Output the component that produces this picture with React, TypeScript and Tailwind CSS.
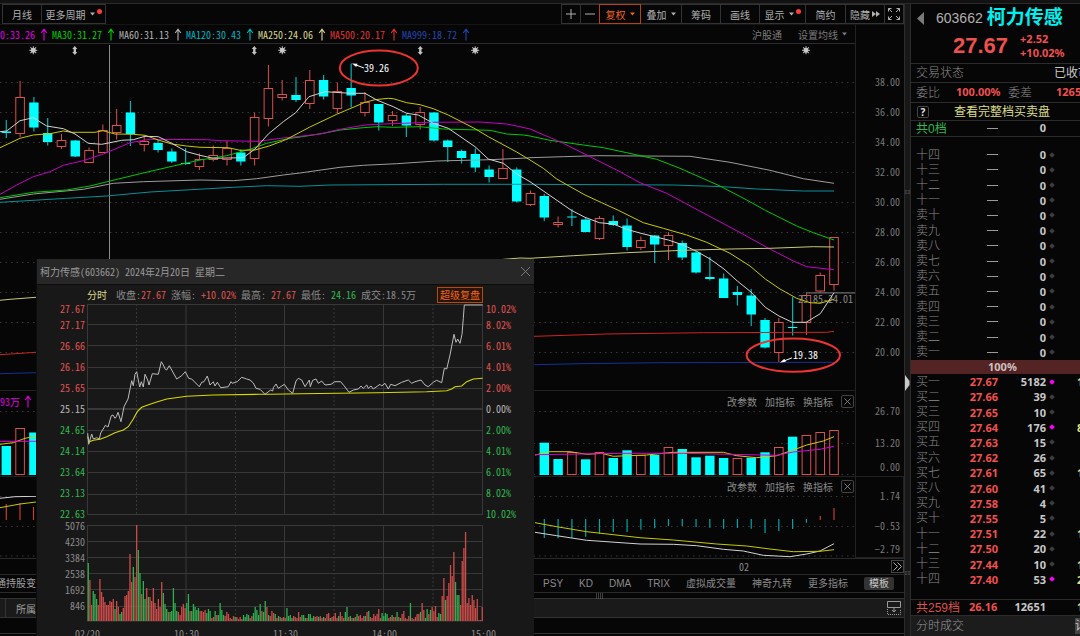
import React from "react";

type Kind = "up" | "down";
type Candle = [Kind, number, number, number, number];

const MONO = "font-['Noto_Sans_Mono_CJK_SC','Liberation_Mono','Noto_Sans_CJK_SC',monospace]";
const SANS = "font-['Liberation_Sans','Noto_Sans_CJK_SC',sans-serif]";
const BOLD = "font-['Noto_Sans','Noto_Sans_CJK_SC',sans-serif] font-bold";

const RED = "#d9504c";
const CYAN = "#00ffff";

const candleX = (i: number) => 6.3 + 13.795 * i;

/* kind, high, body top, body bottom, low */
const candles: Candle[] = [
  ["down", 120, 131.5, 133, 138], ["up", 81, 97.5, 133.5, 137], ["down", 97, 102.5, 127.5, 131.5],
  ["down", 118, 133, 142, 145.5], ["up", 134, 140.5, 146.5, 149], ["down", 140, 140.5, 156.5, 157],
  ["up", 147.5, 150.5, 162.5, 162.5], ["up", 124.5, 130.5, 152.5, 153], ["up", 109, 125.5, 132.5, 139.5],
  ["down", 101, 112.5, 134, 146], ["up", 136, 141.5, 144.5, 151.5], ["down", 140, 143, 150, 152.5],
  ["down", 148.5, 151.5, 161.5, 163], ["down", 148, 163, 164, 165], ["up", 153.5, 159.5, 166.5, 170],
  ["up", 145.5, 155.5, 159.5, 161.5], ["up", 141, 148.5, 159.5, 165.5], ["down", 149.5, 152.5, 161.5, 165.5],
  ["up", 112.5, 117.5, 158.5, 165.5], ["up", 65, 88.5, 118.5, 126.5], ["up", 80, 94.5, 97.5, 100.5],
  ["down", 77, 95, 100, 102], ["up", 70, 80.5, 103.5, 109], ["down", 75, 80, 96.5, 99.5],
  ["up", 82.5, 91.5, 108.5, 113.5], ["down", 63.5, 88, 95.5, 107.5], ["up", 92, 102.5, 112.5, 116.5],
  ["down", 104, 104, 122.5, 130.5], ["up", 111, 115.5, 120.5, 126], ["down", 113.5, 115.5, 125.5, 137],
  ["up", 107, 112.5, 124.5, 129.5], ["down", 112, 112.5, 140.5, 141.5], ["down", 139.5, 140.5, 147, 162],
  ["down", 149.5, 151, 158, 163.5], ["down", 148.5, 154, 167.5, 172], ["down", 165.5, 169.5, 177, 182.5],
  ["up", 149, 168.5, 178.5, 179], ["down", 167.5, 169.5, 201.5, 202.5], ["up", 190.5, 193.5, 204.5, 206],
  ["down", 194, 196, 217.5, 221], ["up", 216.5, 222.5, 224.5, 227.5], ["down", 209, 216.5, 217.5, 226],
  ["down", 217, 219.5, 232, 232.5], ["up", 216, 218.5, 238.5, 240], ["down", 215.5, 221, 225, 226],
  ["down", 218.5, 225.5, 247, 250.5], ["up", 236.5, 240.5, 247.5, 250], ["down", 235, 235.5, 244.5, 263],
  ["up", 232, 235.5, 245.5, 260], ["down", 240.5, 243, 257.5, 260], ["down", 251, 252.5, 272.5, 273.5],
  ["down", 257, 277, 279, 280.5], ["down", 273.5, 278.5, 298, 298], ["down", 286, 292, 295, 305.5],
  ["down", 289, 295.5, 314.5, 326], ["down", 318, 320, 347.5, 348.5], ["up", 318, 322.5, 352.5, 362],
  ["down", 297, 327, 328, 335.5], ["up", 293, 295.5, 322.5, 335], ["up", 272.5, 275.5, 291, 292.5],
  ["up", 237, 237.5, 284.5, 290.5],
];

type Seg = { ox: number; oy: number; d: number[] };

/* Series are stored as x,y pairs at three units per chart pixel, in segments with their own origin. */
const trace = (segs: Seg[]) =>
  segs
    .map(({ ox, oy, d }) => {
      const out: string[] = [];
      for (let i = 0; i < d.length; i += 2) out.push(`${(ox + d[i] / 3).toFixed(1)},${(oy + d[i + 1] / 3).toFixed(1)}`);
      return out.join(" ");
    })
    .join(" ");

const averages: { color: string; segs: Seg[] }[] = [
  { color: "#0a8f98", segs: [
    { ox: 0, oy: 0, d: [0, 607, 200, 595, 320, 588, 450, 576, 700, 562, 800, 557, 900, 559] },
    { ox: 230, oy: 0, d: [300, 555, 640, 553, 890, 553] },
    { ox: 530, oy: 0, d: [0, 553, 430, 555, 580, 560, 680, 567, 820, 573, 912, 573] } ] },
  { color: "#9c9c9c", segs: [
    { ox: 0, oy: 0, d: [0, 598, 100, 582, 250, 568, 340, 550, 430, 545, 600, 540, 700, 542, 770, 536, 850, 525, 900, 519] },
    { ox: 230, oy: 0, d: [330, 502, 400, 496, 500, 491, 620, 483, 780, 479, 890, 474] },
    { ox: 530, oy: 0, d: [0, 473, 100, 470, 200, 467, 480, 469, 600, 487, 720, 511, 820, 536, 912, 550] } ] },
  { color: "#00c800", segs: [
    { ox: 0, oy: 0, d: [0, 593, 100, 577, 200, 570, 270, 558, 330, 543, 430, 519, 520, 498, 600, 480, 680, 467, 750, 448, 800, 430, 870, 415, 900, 411] },
    { ox: 230, oy: 0, d: [280, 400, 330, 390, 400, 383, 440, 380, 490, 382, 570, 380, 640, 387, 780, 391, 830, 402, 880, 405] },
    { ox: 530, oy: 0, d: [0, 408, 60, 421, 160, 435, 220, 443, 290, 458, 380, 478, 450, 505, 570, 558, 650, 600, 706, 631, 800, 678, 850, 698, 912, 720] } ] },
  { color: "#c400c4", segs: [
    { ox: 0, oy: 0, d: [0, 583, 50, 555, 100, 530, 150, 515, 190, 496, 250, 482, 310, 462, 390, 428, 450, 418, 620, 419, 660, 422, 775, 424, 850, 414, 890, 410] },
    { ox: 230, oy: 0, d: [270, 402, 330, 388, 405, 375, 460, 372, 600, 367, 750, 366, 830, 372, 870, 380] },
    { ox: 530, oy: 0, d: [0, 387, 100, 430, 180, 470, 260, 510, 330, 548, 410, 580, 505, 631, 620, 692, 710, 742, 790, 783, 830, 800, 912, 809] } ] },
  { color: "#c8c800", segs: [
    { ox: 0, oy: 0, d: [0, 443, 60, 415, 100, 405, 150, 401, 190, 393, 215, 397, 285, 397, 309, 392, 345, 402, 400, 403, 435, 406, 475, 420, 515, 432, 560, 438, 600, 442, 685, 443, 720, 451, 765, 450, 810, 437, 860, 418] },
    { ox: 230, oy: 0, d: [238, 382, 320, 343, 405, 307, 435, 299, 475, 295, 490, 296, 530, 308, 570, 314, 610, 326, 655, 345, 735, 386, 775, 410, 860, 456] },
    { ox: 530, oy: 0, d: [0, 480, 40, 505, 80, 537, 165, 585, 215, 608, 265, 631, 340, 668, 400, 685, 470, 705, 530, 727, 600, 760, 660, 798, 706, 837, 750, 867, 800, 895, 840, 908, 870, 910, 912, 898] } ] },
  { color: "#d2d2d2", segs: [
    { ox: 0, oy: 0, d: [0, 395, 20, 393, 60, 362, 100, 353, 140, 378, 190, 386, 225, 402, 265, 430, 305, 433, 330, 428, 365, 421, 400, 419, 435, 409, 475, 410, 515, 430, 560, 455, 600, 466, 640, 475, 730, 473, 765, 447, 805, 402, 850, 365, 887, 338] },
    { ox: 230, oy: 0, d: [237, 290, 285, 275, 362, 280, 405, 280, 440, 300, 490, 320, 530, 340, 565, 345, 610, 370, 655, 385, 735, 440, 775, 477, 820, 490, 860, 522] },
    { ox: 530, oy: 0, d: [0, 545, 124, 631, 165, 652, 208, 668, 249, 672, 290, 688, 333, 700, 374, 710, 415, 720, 457, 734, 500, 754, 540, 777, 582, 807, 622, 843, 663, 876, 706, 922, 747, 948, 787, 967, 828, 967, 871, 941, 912, 878] } ] },
  { color: "#c9c97a", segs: [
    { ox: 0, oy: 255, d: [0, 136, 30, 133, 108, 127, 1560, 9] },
    { ox: 530, oy: 210, d: [0, 145, 130, 137, 290, 128, 460, 121, 600, 117, 720, 115, 850, 110, 912, 111] } ] },
  { color: "#cf2222", segs: [
    { ox: 0, oy: 255, d: [0, 299, 108, 292] },
    { ox: 530, oy: 210, d: [15, 379, 230, 372, 520, 368, 890, 367, 912, 364] } ] },
  { color: "#16309a", segs: [
    { ox: 0, oy: 255, d: [0, 356, 108, 353] },
    { ox: 530, oy: 210, d: [15, 464, 150, 461, 390, 458, 912, 457] } ] },
];

function Dotted({ ys, x2 = 855 }: { ys: number[]; x2?: number }) {
  return (
    <g stroke="#383838" strokeDasharray="1.5 4">
      {ys.map((y) => <line key={y} x1={0} x2={x2} y1={y} y2={y} />)}
    </g>
  );
}

function Sun({ x }: { x: number }) {
  return (
    <g transform={`translate(${x} 50.3)`} stroke="#c8c8c8" strokeWidth={1}>
      <circle r={2} fill="#c8c8c8" />
      {[0, 45, 90, 135].map((a) => <line key={a} x1={-4} x2={4} y1={0} y2={0} transform={`rotate(${a})`} />)}
    </g>
  );
}

function UpDown({ x }: { x: number }) {
  return <path d={`M${x} 46l2.6 3h-1.4v3h1.4l-2.6 3-2.6-3h1.4v-3h-1.4z`} fill="#c0c0c0" />;
}

function PriceChart() {
  return (
    <svg viewBox="0 44 855 346" preserveAspectRatio="xMaxYMin slice" className="block h-[346px] w-full" role="img" aria-label="日K线">
      <Dotted ys={[82.5, 112.5, 142.5, 172.5, 202.5, 232.5, 262.5, 292.5, 322.5, 352.5]} />
      <line x1={109.5} x2={109.5} y1={45} y2={260} stroke="#8a8a8a" />
      {candles.map(([kind, high, top, bottom, low], i) => {
        const x = candleX(i);
        const h = bottom - top;
        return kind === "down" ? (
          <g key={i}>
            <line x1={x} x2={x} y1={high} y2={low} stroke="#00b4b8" strokeWidth={1.2} />
            <rect x={x - 4.7} y={top} width={9.4} height={Math.max(h, 1)} fill={CYAN} />
          </g>
        ) : (
          <g key={i} stroke={RED}>
            <line x1={x} x2={x} y1={high} y2={top} />
            <line x1={x} x2={x} y1={bottom} y2={low} />
            <rect x={x - 4.3} y={top} width={8.6} height={h} fill="#060606" />
          </g>
        );
      })}
      <line x1={806} x2={855} y1={292.8} y2={292.8} stroke="#6a6a6a" strokeWidth={1.2} />
      <text x={798} y={303} className="text-[10px]" fill="#8a8a8a">23.85-24.01</text>
      {averages.map((a, i) => (
        <polyline key={i} points={trace(a.segs)} fill="none" stroke={a.color} strokeWidth={1} />
      ))}
      {[33.3, 282.3, 475.2, 806].map((x) => <Sun key={x} x={x} />)}
      {[74.8, 254.3, 420.3].map((x) => <UpDown key={x} x={x} />)}
      <path d="M364 68L355 64.6" stroke="#fff" fill="none" />
      <path d="M352 63.5l5.6 .2-1.4 3.2z" fill="#fff" />
      <text x={364} y={72} className="text-[10px]" fill="#fff">39.26</text>
      <path d="M792 357.8L784 361" stroke="#fff" fill="none" />
      <path d="M780 362.4l4.4-3.6 1.4 3z" fill="#fff" />
      <text x={793} y={358.5} className="text-[10px]" fill="#fff">19.38</text>
      <ellipse cx={378.8} cy={68} rx={39} ry={17.5} fill="none" stroke="#ee3430" strokeWidth={2} />
      <ellipse cx={793.3} cy={355.2} rx={46.7} ry={16.6} fill="none" stroke="#ee3430" strokeWidth={2} />
    </svg>
  );
}

/* candle index -> top of its volume bar */
const volumes: [number, Kind, number][] = [
  [0, "down", 446], [1, "up", 428.5], [2, "down", 432.5],
  [39, "down", 442.7], [40, "down", 459], [41, "up", 452.5], [42, "down", 459.3], [43, "up", 452.5],
  [44, "down", 458], [45, "down", 450.3], [46, "up", 455.5], [47, "down", 455], [48, "up", 447.5],
  [49, "down", 449], [50, "down", 457.3], [51, "down", 455.7], [52, "down", 458], [53, "up", 458.5],
  [54, "down", 457.7], [55, "down", 452.3], [56, "up", 447.5], [57, "down", 436.7], [58, "up", 435.5],
  [59, "up", 432.5], [60, "up", 430.5],
];

function VolumeChart() {
  return (
    <svg viewBox="0 411 855 65" preserveAspectRatio="xMaxYMin slice" className="block h-[65px] w-full" role="img" aria-label="成交量">
      <Dotted ys={[411.5, 443.5, 474.5]} />
      {volumes.map(([i, kind, top]) =>
        kind === "down" ? (
          <rect key={i} x={candleX(i) - 4.7} y={top} width={9.4} height={475 - top} fill={CYAN} />
        ) : (
          <rect key={i} x={candleX(i) - 4.3} y={top} width={8.6} height={474.5 - top} fill="#060606" stroke={RED} />
        ),
      )}
      <polyline fill="none" stroke="#d8c800" points={trace([{ ox: 0, oy: 255, d: [0, 568, 40, 563, 75, 550, 108, 543] }])} />
      <polyline fill="none" stroke="#e800e8" points="0,441.3 36,441.3" />
      <polyline fill="none" stroke="#d8c800" points={trace([{ ox: 530, oy: 390, d: [15, 195, 60, 185, 120, 185, 170, 193, 215, 190, 250, 199, 350, 195, 430, 187, 580, 187, 620, 197, 680, 203, 740, 197, 790, 180, 830, 165, 880, 153, 912, 140] }])} />
      <polyline fill="none" stroke="#d800d8" points={trace([{ ox: 530, oy: 390, d: [15, 194, 280, 190, 460, 190, 600, 193, 740, 196, 790, 186, 870, 178, 912, 169] }])} />
    </svg>
  );
}

const macdBars = [538, 538.3, 538, 536.7, 533.7, 532, 532, 529.7, 528.3, 526, 526, 527, 527.7, 528.7, 528, 528.7, 533, 531, 529, 522.7];

function MacdChart() {
  return (
    <svg viewBox="0 496 855 62" preserveAspectRatio="xMaxYMin slice" className="block h-[62px] w-full" role="img" aria-label="MACD">
      <Dotted ys={[496.5, 526.5, 556]} />
      {macdBars.map((y, i) => (
        <line key={i} x1={candleX(39 + i)} x2={candleX(39 + i)} y1={519} y2={y} stroke="#00a6aa" strokeWidth={1.2} />
      ))}
      <g stroke="#c83a36" strokeWidth={1.2}>
        <line x1={820.3} x2={820.3} y1={516} y2={520} />
        <line x1={834} x2={834} y1={508} y2={520} />
        <line x1={6.3} x2={6.3} y1={504} y2={520} />
        <line x1={20} x2={20} y1={503} y2={520} />
        <line x1={33.5} x2={33.5} y1={507} y2={520} />
      </g>
      <polyline fill="none" stroke="#d2d2d2" points={trace([{ ox: 0, oy: 446, d: [0, 157, 45, 152, 108, 151] }])} />
      <polyline fill="none" stroke="#c8c800" points={trace([{ ox: 0, oy: 446, d: [0, 185, 60, 174, 108, 168] }])} />
      <polyline fill="none" stroke="#d2d2d2" points={trace([{ ox: 530, oy: 390, d: [15, 427, 80, 437, 170, 451, 330, 462, 430, 463, 500, 467, 580, 478, 640, 483, 700, 496, 780, 500, 830, 492, 870, 483, 912, 461] }])} />
      <polyline fill="none" stroke="#c8c800" points={trace([{ ox: 530, oy: 390, d: [15, 398, 80, 410, 170, 425, 330, 443, 430, 450, 560, 462, 650, 468, 720, 477, 790, 485, 870, 484, 912, 479] }])} />
    </svg>
  );
}

function Caret() {
  return (
    <svg viewBox="0 0 5 4" className="h-1 w-[5px] shrink-0" aria-hidden="true">
      <path d="M0 .5h5L2.5 3.5z" fill="currentColor" />
    </svg>
  );
}

function UpArrow() {
  return (
    <svg viewBox="0 0 8 13" className="h-[13px] w-2 shrink-0" aria-hidden="true">
      <path d="M4 12.5V1.5M1.2 5L4 1.2 6.8 5" fill="none" stroke="currentColor" strokeWidth="1.1" />
    </svg>
  );
}

function Toolbar() {
  const base = "flex h-5 items-center justify-center border border-[#333] whitespace-nowrap text-[#b0b0b0]";
  return (
    <div className="flex h-[21px] shrink-0 items-start border-b border-[#151515] pl-0.5 text-[10px]">
      <button className={`${base} w-10`}>月线</button>
      <button className={`${base} -ml-px w-[65px] gap-1`}>
        更多周期 <Caret /><span className="-ml-0.5 mb-1.5 size-[5px] rounded-full bg-[#ff3b3b]" />
      </button>
      <div className="ml-auto flex">
        <button className={`${base} w-5`} aria-label="放大">
          <svg viewBox="0 0 10 10" className="size-2.5"><path d="M5 0v10M0 5h10" stroke="currentColor" /></svg>
        </button>
        <button className={`${base} -ml-px w-5`} aria-label="缩小">
          <svg viewBox="0 0 10 10" className="size-2.5"><path d="M0 5h10" stroke="currentColor" /></svg>
        </button>
        <button className="z-10 -ml-px flex h-5 w-[42px] items-center justify-center gap-1 border border-[#b8420c] text-[#f0641e]">复权 <Caret /></button>
        <button className={`${base} -ml-px w-[42px] gap-1`}>叠加 <Caret /></button>
        <button className={`${base} -ml-px w-10`}>筹码</button>
        <button className={`${base} -ml-px w-10`}>画线</button>
        <button className={`${base} -ml-px w-[47px] gap-1`}>
          显示 <Caret /><span className="-ml-0.5 mb-1.5 size-[5px] rounded-full bg-[#ff3b3b]" />
        </button>
        <button className={`${base} -ml-px w-[41px]`}>简约</button>
        <button className={`${base} -ml-px w-10 gap-0.5`}>
          隐藏
          <svg viewBox="0 0 8 6" className="h-1.5 w-2" aria-hidden="true"><path d="M0 0l4 3-4 3zM4 0l4 3-4 3z" fill="currentColor" /></svg>
        </button>
        <button className={`${base} -ml-px w-5`} aria-label="全屏">
          <svg viewBox="0 0 12 12" className="size-3">
            <path d="M.5 3.500V.5H3.500M.5.5l3.500 3.500M8.500.5h3V3.500M11.500.5L8 4M.5 8.500v3H3.500M.5 11.500L4 8M8.500 11.500h3V8.500M11.500 11.500L8 8" fill="none" stroke="currentColor" />
          </svg>
        </button>
      </div>
    </div>
  );
}

function AverageRow() {
  const items = [
    ["MA30:31.27", "text-[#00d000]"],
    ["MA60:31.13", "text-[#b4b4b4]"],
    ["MA120:30.43", "text-[#00b4c0]"],
    ["MA250:24.06", "text-[#d8d88a]"],
    ["MA500:20.17", "text-[#e03434]"],
    ["MA999:18.72", "text-[#2246b4]"],
  ];
  return (
    <div className="flex h-[19px] items-center overflow-hidden border-b border-[#2a2a2a] whitespace-nowrap text-[10px]">
      <div className="flex w-12 shrink-0 items-center justify-end gap-[5px] overflow-hidden text-[#e000e0]">
        <span>0:33.26</span><UpArrow />
      </div>
      {items.map(([t, c]) => (
        <div key={t} className={`ml-1 flex shrink-0 items-center gap-[5px] ${c}`}><span>{t}</span><UpArrow /></div>
      ))}
      <div className="ml-auto flex items-center gap-4 pr-2 text-[#7c7c7c]">
        <a href="#hgt">沪股通</a>
        <button className="flex items-center gap-1">设置均线 <Caret /></button>
      </div>
    </div>
  );
}

function PanelHeader({ className, children }: { className: string; children?: React.ReactNode }) {
  return (
    <div className={`flex items-center justify-end gap-2 border-t border-[#222] pr-px text-[10px] text-[#8a8a8a] ${className}`}>
      {children}
      <button>改参数</button>
      <button>加指标</button>
      <button>换指标</button>
      <button aria-label="关闭指标" className="flex size-[13px] items-center justify-center rounded-xs border border-[#444]">
        <svg viewBox="0 0 8 8" className="size-[7px]"><path d="M.5.5l7 7M7.500.5l-7 7" stroke="currentColor" /></svg>
      </button>
    </div>
  );
}

function Axis() {
  const label = "h-3 leading-3";
  return (
    <div className="flex w-[49px] shrink-0 flex-col border-l border-[#222] text-right text-[10px] text-[#787878]">
      <div className="h-[365px] pt-[42px] pr-1">
        {["38.00", "36.00", "34.00", "32.00", "30.00", "28.00", "26.00", "24.00", "22.00", "20.00"].map((v) => (
          <div key={v} className="h-[30px] leading-[30px]">{v}</div>
        ))}
      </div>
      <div className="flex h-[86px] flex-col gap-5 pt-[15px] pr-1 pb-0.5">
        <div className={label}>26.70</div>
        <div className={label}>13.20</div>
        <div className={`-mt-2 ${label}`}>0.00</div>
      </div>
      <div className="flex h-[82px] flex-col border border-l-0 border-[#222] pt-[13px] pr-[3px] pb-0.5">
        <div className={label}>1.74</div>
        <div className={`mt-[18px] ${label}`}>−0.53</div>
        <div className={`mt-auto ${label}`}>−2.79</div>
      </div>
    </div>
  );
}

function Grip({ className }: { className: string }) {
  return (
    <svg viewBox="0 0 7 6" className={className} aria-hidden="true">
      <path d="M0 1h7M0 3h7M0 5h7" stroke="#777" strokeDasharray="1 1" />
    </svg>
  );
}

function Footer() {
  return (
    <div className="text-[10px] text-[#8a8a8a]">
      <div className="flex h-4 items-center justify-end border-t border-[#2a2a2a]">
        <span className="mr-[142px]">02</span>
        <button aria-label="更多" className="flex size-[13px] items-center justify-center border border-[#444]">
          <svg viewBox="0 0 9 9" className="size-[9px]"><path d="M.5.5l4 4-4 4M4.500.5l4 4-4 4" fill="none" stroke="#b0b0b0" /></svg>
        </button>
      </div>
      <div className={`flex h-[18px] items-center border-t border-[#2a2a2a] whitespace-nowrap ${SANS}`}>
        <div className="flex w-9 justify-end overflow-hidden text-[#a0a0a0]"><button className="shrink-0">通持股变</button></div>
        <div className="ml-auto flex items-center gap-4 pr-2.5">
          <button>PSY</button>
          <button>KD</button>
          <button>DMA</button>
          <button>TRIX</button>
          <button>虚拟成交量</button>
          <button>神奇九转</button>
          <button>更多指标</button>
          <button className="rounded-xs bg-[#333] px-[5px] leading-[13px] text-[#c8c8c8]">模板</button>
        </div>
      </div>
      <div className="flex h-1.5 justify-center border-t border-[#2a2a2a] pl-[294px]"><Grip className="h-1.5 w-[7px]" /></div>
      <div className="flex h-[19px] items-center justify-between border-t border-[#333] bg-[#1a1a1a] pr-[3px]">
        <button className="ml-[5px] h-full border-l border-[#333] pl-2.5 text-[#a0a0a0]">所属</button>
        <button aria-label="展开面板">
          <svg viewBox="0 0 14 14" className="size-3.5" fill="none" stroke="#9a9a9a">
            <path d="M.5.5h13v6H.5z" /><path d="M.5 8v5.500h13V8" strokeDasharray="1 1" /><path d="M7 6.500v4.500M5 9l2 2 2-2" />
          </svg>
        </button>
      </div>
      <div className="h-4 border-t border-[#333]" />
      <div className="h-1 border-t border-[#333]" />
    </div>
  );
}

const minutePrice: Seg[] = [
  { ox: 0, oy: 255, d: [263, 535, 266, 568, 275, 537, 280, 552, 290, 548, 298, 552, 302, 534, 312, 518, 316, 511, 324, 516, 334, 482, 339, 480, 345, 490, 349, 485, 354, 472, 363, 500, 372, 455, 384, 432, 395, 377, 400, 392, 405, 358, 410, 350, 415, 375, 419, 396, 424, 380, 430, 396, 435, 358, 443, 375, 447, 390, 457, 356, 475, 358, 484, 320, 490, 330, 496, 343, 500, 345, 508, 332, 515, 345, 530, 372, 545, 362, 556, 350, 566, 370, 575, 372, 598, 395, 605, 382, 612, 380, 622, 363, 630, 390, 640, 380, 645, 393, 652, 382, 662, 398, 685, 395, 693, 380, 697, 385, 712, 380, 725, 367, 740, 372, 750, 375, 760, 384, 768, 400, 780, 403, 795, 418, 812, 405, 818, 408] },
  { ox: 270, oy: 255, d: [10, 398, 18, 387, 25, 400, 43, 388, 55, 405, 68, 415, 78, 378, 85, 370, 95, 375, 105, 395, 118, 375, 121, 395, 128, 376, 138, 372, 145, 385, 155, 378, 165, 390, 183, 388, 195, 380, 212, 380, 222, 392, 237, 412, 250, 405, 265, 402, 273, 393, 280, 400, 290, 390, 295, 400, 303, 393, 310, 402, 330, 388, 335, 393, 345, 385, 355, 402, 362, 388, 375, 392, 395, 382, 415, 375, 425, 385, 435, 380, 453, 375, 465, 390, 475, 395, 490, 382, 500, 376, 515, 383, 523, 340, 530, 342, 540, 300, 552, 238, 558, 262, 563, 252, 570, 265, 576, 238, 580, 190, 583, 150, 638, 150] },
];
const minuteAverage: Seg[] = [
  { ox: 0, oy: 255, d: [263, 545, 268, 560, 280, 556, 300, 553, 320, 545, 345, 533, 370, 525, 385, 515, 400, 492, 412, 470, 425, 457, 450, 448, 470, 441, 500, 432, 560, 424, 640, 420, 780, 418] },
  { ox: 270, oy: 255, d: [0, 418, 90, 416, 320, 413, 470, 410, 530, 407, 545, 402, 555, 395, 575, 393, 590, 380, 610, 372, 638, 370] },
];

/* bar height per interval; negative values are drawn green */
const minuteVolume = [
  -58, 41, 16, -30, -27, -22, 16, 42, 29, 24, 19, 16, 16, 20, 19, 22, -12, 20, 14, -7, -9, 13, 25, 26, 30, 67, 39, -54, 44, 96,
  -71, -48, 27, -40, -22, 33, -24, 24, 20, 33, 18, 12, 22, 14, 39, -28, -17, -12, 9, -9, -10, -33, -18, -10, 9, 6, 14, 17, 13, -18,
  -27, 10, -10, -17, -14, -11, -13, 10, 10, 9, 11, -8, -12, -10, 3, 4, -10, 6, -6, -18, -11, -6, 5, 9, 7, 3, 2, 5, -4, 4,
  2, 4, 2, -6, -4, -7, -6, 3, 5, -8, -14, -11, -6, -17, 10, -9, -20, 14, -6, 5, 10, 8, -7, 3, -5, 4,
  -3, 4, 3, -13, -5, -6, -3, 5, 4, 3, 9, 4, -6, -6, -3, 3, -7, -7, -3, -5, 4, 5, -4, 5, 3, -4, 3, 7, 8, -3,
  4, 5, 8, 3, -5, 9, 5, 3, -9, -14, 4, -5, 3, -3, 4, -7, 5, 6, 3, 5, -5, 9, -10, 4, 3, 7, 5, 7, 12, 3,
  -8, -5, -8, -7, 3, 4, -6, 4, 4, -9, 4, -3, 7, 10, 3, 2, 5, -18, 3, 2, 4, 7, 7, -9, 18, 11, -3, -12, 7, -11,
  14, 10, 15, 4, -8, -7, 25, 43, -21, 25, 38, 56, 45, 69, -39, -26, -26, 16, 60, 73, 89, 18, 23, 16, 26, 21, 13, 22, 1, 1, 14,
];

function MinuteChart() {
  const solid = [87.5, 186, 284.5, 383.5, 482.5];
  const dotted = [136.5, 235.5, 334, 433];
  const step = 394 / (minuteVolume.length - 1);
  return (
    <svg viewBox="87 304 396 320" preserveAspectRatio="none" className="block h-80 w-full" role="img" aria-label="分时走势">
      <g stroke="#383838">
        {[304.5, 324.5, 345.5, 367.5, 388.5, 430.5, 451.5, 472.5, 494.5, 514.5, 525.5, 541.5, 557.5, 573.5, 589.5, 606.5, 621].map((y) => (
          <line key={y} x1={87} x2={483} y1={y} y2={y} />
        ))}
        <line x1={87} x2={483} y1={409} y2={409} strokeWidth={2} />
        {solid.map((x) => <path key={x} d={`M${x} 304V515M${x} 525V621`} />)}
        {dotted.map((x) => <path key={x} d={`M${x} 304V515M${x} 525V621`} strokeDasharray="2 2" />)}
      </g>
      {minuteVolume.map((v, i) => (
        <rect key={i} x={87.6 + i * step} y={621 - Math.abs(v)} width={1.3} height={Math.abs(v)} fill={v < 0 ? "#2fb050" : "#cc4c4a"} />
      ))}
      <polyline points={trace(minuteAverage)} fill="none" stroke="#d8d800" strokeWidth={1.1} />
      <polyline points={trace(minutePrice)} fill="none" stroke="#bcbcbc" strokeWidth={1} />
    </svg>
  );
}

const levels: [string, string, string][] = [
  ["27.17", "8.02%", "text-[#e05450]"], ["26.66", "6.01%", "text-[#e05450]"], ["26.16", "4.01%", "text-[#e05450]"],
  ["25.65", "2.00%", "text-[#e05450]"], ["25.15", "0.00%", "text-[#b8b8b8]"], ["24.65", "2.00%", "text-[#30b850]"],
  ["24.14", "4.01%", "text-[#30b850]"], ["23.64", "6.01%", "text-[#30b850]"], ["23.13", "8.02%", "text-[#30b850]"],
];

function Levels({ side }: { side: 0 | 1 }) {
  return (
    <>
      <div className="h-2.5 leading-[10px] text-[#e05450]">{side ? "10.02%" : "27.67"}</div>
      {levels.map((l) => <div key={l[0]} className={`h-[21px] leading-[21px] ${l[2]}`}>{l[side]}</div>)}
      <div className="flex h-4 flex-col justify-end leading-[10px] text-[#30b850]">{side ? "10.02%" : "22.63"}</div>
    </>
  );
}

function DayPopup() {
  const stat = (name: string, value: string, color: string) => (
    <span className="whitespace-pre text-[#8a8a8a]">{name}<span className={color}>{value}</span></span>
  );
  return (
    <section className="absolute top-[255px] bottom-0 left-9 z-20 w-[498px] overflow-hidden border-l border-[#0c0c0c] bg-[#181818] text-[10px]">
      <header className="flex h-[26px] items-center justify-between border-b border-[#0c0c0c] bg-[#272727] pr-1 pl-[3px] text-[#9a9a9a]">
        <h2>柯力传感(603662) 2024年2月20日 星期二</h2>
        <button aria-label="关闭">
          <svg viewBox="0 0 9 9" className="size-[9px]"><path d="M0 0l9 9M9 0l-9 9" stroke="#777" /></svg>
        </button>
      </header>
      <div className="flex h-[19px] items-center gap-[5px] pr-[51px] pl-[50px] whitespace-nowrap">
        <span className="mr-1 text-[#d8d88a]">分时</span>
        {stat("收盘:", "27.67", "text-[#e05450]")}
        {stat("涨幅: ", "+10.02%", "text-[#e05450]")}
        {stat("最高: ", "27.67", "text-[#e05450]")}
        {stat("最低: ", "24.16", "text-[#30b850]")}
        {stat("成交:", "18.5万", "")}
        <button className="ml-auto border border-[#b8480c] bg-[#2a1608] px-0.5 leading-[14px] text-[#f0641e]">超级复盘</button>
      </div>
      <div className="flex">
        <div className="w-[50px] shrink-0 pr-0.5 text-right">
          <Levels side={0} />
          {["5076", "4230", "3384", "2538", "1692", "846"].map((v) => (
            <div key={v} className="h-4 leading-[14px] text-[#8a8a8a]">{v}</div>
          ))}
        </div>
        <div className="min-w-0 flex-1"><MinuteChart /></div>
        <div className="w-[51px] shrink-0 pl-[3px]"><Levels side={1} /></div>
      </div>
      <div className="flex justify-between pt-1 pr-[38px] pl-[38px] leading-3 text-[#8a8a8a]">
        {["02/20", "10:30", "11:30", "14:00", "15:00"].map((t) => <span key={t}>{t}</span>)}
      </div>
    </section>
  );
}

type Quote = [string, string, string, boolean, string];
const asks = ["十四", "十三", "十二", "十一", "卖十", "卖九", "卖八", "卖七", "卖六", "卖五", "卖四", "卖三", "卖二", "卖一"];
const bids: Quote[] = [
  ["买一", "27.67", "5182", true, "1"], ["买二", "27.66", "39", false, ""], ["买三", "27.65", "10", false, ""],
  ["买四", "27.64", "176", true, "8"], ["买五", "27.63", "15", false, ""], ["买六", "27.62", "26", false, ""],
  ["买七", "27.61", "65", false, "1"], ["买八", "27.60", "41", false, ""], ["买九", "27.58", "4", false, ""],
  ["买十", "27.55", "5", false, ""], ["十一", "27.51", "22", false, "1"], ["十二", "27.50", "20", false, ""],
  ["十三", "27.44", "10", false, "1"], ["十四", "27.40", "53", true, "2"],
];

function QuoteTable({ rows, label }: { rows: Quote[]; label: string }) {
  return (
    <table aria-label={label} className="h-[213px] w-[200px] table-fixed border-collapse leading-none">
      <tbody>
        {rows.map(([name, price, qty, hot, extra]) => (
          <tr key={name}>
            <th scope="row" className="w-[46px] py-0 pl-[5px] text-left text-xs leading-none font-light text-[#8a8a8a]">{name}</th>
            <td className={`w-[41px] p-0 text-right text-[11px] text-[#f0504e] ${BOLD}`}>
              {price || <span className="ml-auto block h-px w-[11px] bg-[#9a9a9a]" aria-label="无" />}
            </td>
            <td className={`w-[48px] p-0 text-right text-[11px] text-[#c8c8c8] ${BOLD}`}>{qty}</td>
            <td className="w-[12px] p-0">
              <span className={`mx-auto block size-1 rotate-45 ${hot ? "bg-[#ff00ff]" : "bg-[#3c3c3c]"}`} />
            </td>
            <td className={`py-0 pr-0 pl-[19px] text-[11px] text-[#e0e08a] ${BOLD}`}>{extra}</td>
          </tr>
        ))}
      </tbody>
    </table>
  );
}

function QuotePanel() {
  const line = "border-b border-[#2c2c2c]";
  return (
    <aside className={`flex w-[169px] shrink-0 flex-col overflow-hidden whitespace-nowrap ${SANS}`}>
      <header className={`h-[60px] shrink-0 ${line}`}>
        <div className="flex h-7 items-center pl-1.5">
          <button aria-label="上一只">
            <svg viewBox="0 0 7 13" className="h-[13px] w-[7px]"><path d="M7 0v13L0 6.500z" fill="#7a7a7a" /></svg>
          </button>
          <span className="ml-3 text-sm text-[#b0b0b0]">603662</span>
          <h1 className="ml-1 text-[19px] leading-7 font-bold text-[#00f0f0]">柯力传感</h1>
        </div>
        <div className="flex items-center pl-[42px] text-[#f0504e]">
          <span className="text-[22px] leading-6 font-bold">27.67</span>
          <div className={`ml-3 text-[11px] leading-[14px] ${BOLD}`}>
            <div>+2.52</div>
            <div>+10.02%</div>
          </div>
        </div>
      </header>
      <div className={`flex h-[19px] shrink-0 items-center pl-[5px] text-xs ${line}`}>
        <span className="w-[138px] shrink-0 font-light text-[#8a8a8a]">交易状态</span><span className="text-[#c8c8c8]">已收市</span>
      </div>
      <div className={`flex h-[20px] shrink-0 items-center pl-[5px] text-xs text-[#8a8a8a] ${line}`}>
        <span className="w-10 shrink-0 font-light">委比</span>
        <span className={`w-[52px] shrink-0 text-[11px] text-[#f0504e] ${BOLD}`}>100.00%</span>
        <span className="w-12 shrink-0 font-light">委差</span>
        <span className={`text-[11px] text-[#f0504e] ${BOLD}`}>12651</span>
      </div>
      <div className={`flex h-[18px] shrink-0 items-center pl-1.5 ${line}`}>
        <button className={`size-3 rounded-xs border border-[#444] text-[10px] leading-[10px] text-[#e0e0e0] ${BOLD}`}>?</button>
        <a href="#depth" className="ml-[25px] text-xs text-[#dcdc8c]">查看完整档买卖盘</a>
      </div>
      <div className={`flex h-4 shrink-0 items-center pl-[5px] text-xs ${line}`}>
        <span className="w-[71px] text-[#30b850]">共0档</span>
        <span className="h-px w-[11px] bg-[#9a9a9a]" />
        <span className={`w-12 text-right text-[11px] text-[#c8c8c8] ${BOLD}`}>0</span>
      </div>
      <div className="mt-2.5"><QuoteTable label="卖盘" rows={asks.map((n) => [n, "", "0", false, ""] as Quote)} /></div>
      <div className={`h-[14px] shrink-0 bg-[#542424] pl-[77px] text-[11px] leading-[14px] text-[#d0c0c0] ${BOLD}`}>100%</div>
      <div><QuoteTable label="买盘" rows={bids} /></div>
      <div className={`mt-3 flex h-[17px] shrink-0 items-center border-t border-[#2c2c2c] pl-[5px] text-xs ${line}`}>
        <span className="w-[53px] shrink-0 text-[#d9504c]">共259档</span>
        <span className={`w-[30px] shrink-0 text-[11px] text-[#f0504e] ${BOLD}`}>26.16</span>
        <span className={`w-[47px] shrink-0 text-right text-[11px] text-[#c8c8c8] ${BOLD}`}>12651</span>
        <span className={`ml-[31px] text-[11px] text-[#e0e08a] ${BOLD}`}>1</span>
      </div>
      <div className="flex flex-1 items-center bg-[#1c1c1c] pl-[5px] text-xs">
        <span className="w-[159px] shrink-0 font-light text-[#9a9a9a]">分时成交</span>
        <button className="bg-[#444] text-[#c8c8c8]">详</button>
      </div>
    </aside>
  );
}

export default function App() {
  return (
    <div lang="zh-CN" className={`flex h-screen flex-col overflow-hidden bg-[#060606] ${MONO}`}>
      <div className="h-1 shrink-0 border-b border-[#2a2a2a] bg-[#121212]" />
      <div className="flex min-h-0 flex-1">
        <main className="relative flex min-w-0 flex-1 flex-col overflow-hidden">
          <Toolbar />
          <div className="flex shrink-0">
            <div className="min-w-0 flex-1">
              <AverageRow />
              <PriceChart />
              <PanelHeader className="h-[21px]">
                <span className="mr-auto flex w-9 items-center justify-end gap-1 pr-1 whitespace-nowrap text-[#e000e0]">
                  <span>93万</span><UpArrow />
                </span>
              </PanelHeader>
              <VolumeChart />
              <PanelHeader className="h-5" />
              <MacdChart />
            </div>
            <Axis />
          </div>
          <Footer />
          <DayPopup />
        </main>
        <div className="flex w-[7px] shrink-0 flex-col items-center justify-between border-x border-[#2c2c2c] bg-[#181818] pt-[185px] pb-[60px]">
          <Grip className="h-1.5 w-[5px]" />
          <svg viewBox="0 0 5 16" className="h-4 w-[5px]" aria-hidden="true"><path d="M0 0l4.500 6v4L0 16z" fill="#c8c8c8" /></svg>
          <Grip className="h-1.5 w-[5px]" />
        </div>
        <QuotePanel />
      </div>
    </div>
  );
}
